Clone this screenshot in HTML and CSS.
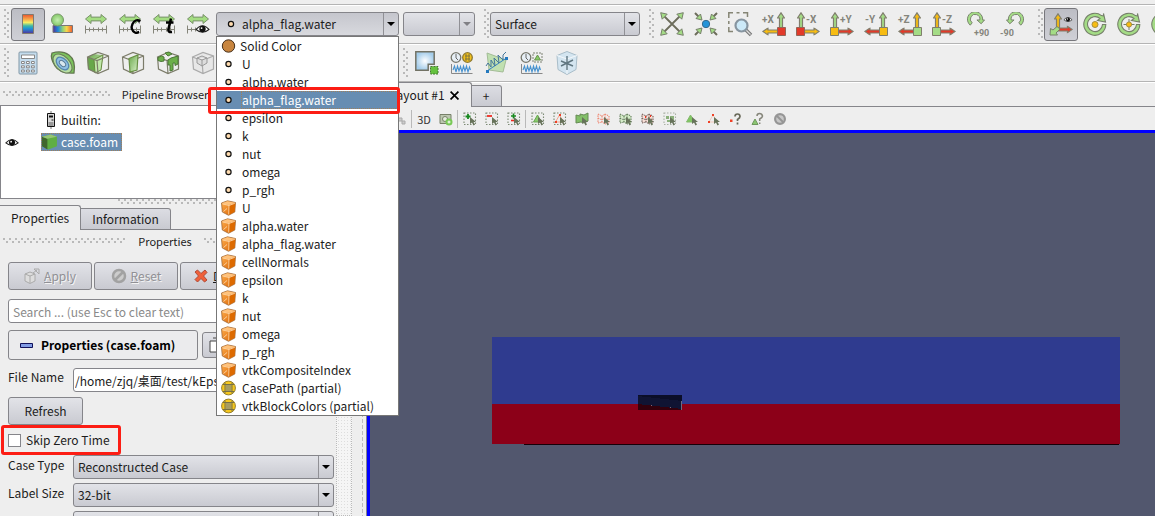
FILE: index.html
```html
<!DOCTYPE html>
<html lang="en">
<head>
<meta charset="utf-8">
<title>ParaView</title>
<link rel="stylesheet" href="styles.css">
</head>
<body>
<svg class="defs" aria-hidden="true">
  <defs>
    <linearGradient id="rainbow-v" x1="0" y1="0" x2="0" y2="1"><stop offset="0" stop-color="#e8532e"/><stop offset=".25" stop-color="#f9a84a"/><stop offset=".42" stop-color="#f5ee62"/><stop offset=".6" stop-color="#3db8a8"/><stop offset=".75" stop-color="#1e8fd5"/><stop offset="1" stop-color="#54309a"/></linearGradient>
    <linearGradient id="rainbow-h"><stop offset="0" stop-color="#5a2d91"/><stop offset=".25" stop-color="#1c86d8"/><stop offset=".5" stop-color="#8fd07a"/><stop offset=".7" stop-color="#f7d84a"/><stop offset="1" stop-color="#ee5a2f"/></linearGradient>
    <radialGradient id="ball"><stop offset="0" stop-color="#c4eeb0"/><stop offset="1" stop-color="#84c868"/></radialGradient>
    <radialGradient id="sky"><stop offset="0" stop-color="#fff"/><stop offset="1" stop-color="#a5cdea"/></radialGradient>
    <linearGradient id="orange" x2="1" y2="1"><stop offset="0" stop-color="#ffb050"/><stop offset="1" stop-color="#d86000"/></linearGradient>
    <linearGradient id="greenface" y2="1"><stop offset="0" stop-color="#6aa84b"/><stop offset="1" stop-color="#d8f0c8"/></linearGradient>
  </defs>
  <symbol id="point" viewBox="0 0 16 16"><circle cx="8" cy="8" r="2.600" fill="#ffdcb0" stroke="#111" stroke-width="1.200"/></symbol>
  <symbol id="solid" viewBox="0 0 16 16"><circle cx="8" cy="8" r="6.200" fill="#c8853f" stroke="#46301c" stroke-width="1"/></symbol>
  <symbol id="cell" viewBox="0 0 16 16"><path d="M1 3 7 .8 15 2.500 14.300 12 8 15.300 1.800 12z" fill="url(#orange)" stroke="#a06a3a" stroke-width=".8"/><path d="M1.300 3.200 8.500 5 14.700 2.700 7 1.200z" fill="#ffc27c"/><path d="M8.500 5.200 8 15 14 11.800 14.700 3z" fill="#dd6a00"/><path d="M2 3.900 8.500 5.500 8.200 14.500M8.500 5.500 14.300 3.300M3 11.500l3.500-3" fill="none" stroke="#ffdfb8" stroke-width=".8"/></symbol>
  <symbol id="field" viewBox="0 0 16 16"><circle cx="8" cy="8" r="6.900" fill="#f6c71c" stroke="#96802e" stroke-width="1"/><path d="M5 5h6v6H5z" fill="#a69c63"/><path d="M4.500 2.500v11M11.500 2.500v11M2.500 4.500h11M2.500 11.500h11" stroke="#777045" stroke-width="1"/></symbol>
  <symbol id="rescale" viewBox="0 0 24 24"><path d="M1.500 7 7 2.500v2.600h10V2.500L22.500 7 17 11.500V8.900H7v2.600z" fill="#a4dd82" stroke="#78906a"/><path d="M1.500 13.500v8M22.500 13.500v8M1.500 17.500h21M5.500 15.500v4M9.500 15.500v4M14.500 15.500v4M18.500 15.500v4" stroke="#85857a" fill="none"/></symbol>
  <symbol id="eye" viewBox="0 0 16 12"><path d="M1 6.500Q8-1.500 15 6.500 8 12.500 1 6.500z" fill="#fff" stroke="#222" stroke-width="1.200"/><circle cx="8" cy="6" r="3.500" fill="#111"/><circle cx="7" cy="5" r="1" fill="#fff"/></symbol>
  <symbol id="wirecube" viewBox="0 0 24 24"><path d="M1.500 6 12 1.500 22.500 5v13L12 22.500 2.500 18zM1.500 6 11 9.500 22.500 5M11 9.500 12 22.500" fill="none" stroke="#7c7c6a" stroke-width="1.200"/></symbol>
  <symbol id="up" viewBox="0 0 8 16"><path d="M4 .8 7.500 6H5.500v9.500h-3V6H.5z" stroke="#807e6d" stroke-width="1.200"/></symbol>
  <symbol id="left" viewBox="0 0 16 8"><path d="M.8 4 6 .5v2h9.500v3H6v2z" stroke="#807e6d" stroke-width="1.100"/></symbol>
  <symbol id="cursor" viewBox="0 0 8 9"><path d="M1 0v7l2-1.500 1.500 3 1.500-1-1.500-2.500H7z" fill="#67735a"/></symbol>
  <symbol id="ring" viewBox="0 0 24 24"><path d="M20.500 4V1.500L22.500 10 14.500 8.500 17 6.500A7.500 7.500 0 1 0 19.500 12.500h3.300A11 11 0 1 1 18.500 3.600z" fill="#a4dc86" stroke="#76806a" stroke-width="1.100"/></symbol>
  <symbol id="rot" viewBox="0 0 20 15"><path d="M4.500 13.500A8 8 0 1 1 17.500 8h2L16 12 11.500 8h3A5 5 0 1 0 6.500 11z" fill="#a4dc86" stroke="#76806a"/></symbol>
  <symbol id="plot" viewBox="0 0 24 24"><circle cx="6" cy="6.500" r="4.800" fill="#e7eff5" stroke="#77776c" stroke-width="1.300"/><path d="M6 3v4l2 2" fill="none" stroke="#666"/><path d="M1.500 13v9.500h21" stroke="#888" fill="none"/><path d="m3 19 1.500-4L6 21l1.500-6L9 20l1.500-4.500L12 21l1.500-6L15 20l1.500-5 1.500 6 1.500-5 1 3" fill="none" stroke="#4792cf" stroke-width="1.100"/></symbol>
  <symbol id="dotted" viewBox="0 0 14 14"><path d="M1 1h11.500v11.500H1z" fill="none" stroke="#7c8a74" stroke-width="1.100" stroke-dasharray="1.500 1.500"/></symbol>
  <symbol id="mesh" viewBox="0 0 14 14"><path d="M1 2 5 4 8 2l4 2v7l-4 1-3-2-4 1zM5 4v6M8 2v9M1 6l4 2 3-2 4 2" stroke-width="1" stroke-dasharray="1.500 1"/></symbol>
</svg>

<div class="menu-edge"></div>

<div class="toolbar main-tools" role="toolbar" aria-label="Display">
  <span class="grip"></span>
  <button class="tool active" aria-label="Color legend"><svg viewBox="0 0 24 24"><path d="M6.500 2.500h11v19h-11z" fill="url(#rainbow-v)" stroke="#807a70"/></svg></button>
  <button class="tool" aria-label="Edit color map"><svg viewBox="0 0 24 24"><path d="M3 13.500h19.500v7H3z" fill="url(#rainbow-h)" stroke="#777"/><circle cx="7.500" cy="8" r="6" fill="url(#ball)" stroke="#79976b"/></svg></button>
  <button class="tool" aria-label="Rescale to data range"><svg viewBox="0 0 24 24"><use href="#rescale"/></svg></button>
  <button class="tool" aria-label="Rescale to custom range"><svg viewBox="0 0 24 24"><use href="#rescale"/><path d="M22.500 9Q17 6.500 14.500 12t2.500 8.500q2 1 4-.5" fill="none" stroke="#000" stroke-width="2.300"/><path d="m22 8-.8 4-1.200-3zM17 21l4-.3v-2z"/></svg></button>
  <button class="tool" aria-label="Rescale over time"><svg viewBox="0 0 24 24"><use href="#rescale"/><path d="M19 6.500 16.500 17q-.8 3.500 3.500 3M14 10.500h7.500" fill="none" stroke="#000" stroke-width="2.600"/></svg></button>
  <button class="tool" aria-label="Rescale to visible range"><svg viewBox="0 0 24 24"><use href="#rescale"/><path d="M11 12h13v10H11z" fill="#eee"/><use href="#eye" x="9" y="11.500" width="15" height="11"/></svg></button>

  <div class="combo color-combo">
    <select aria-label="Color by"><option>alpha_flag.water</option></select>
    <svg class="combo-icon" viewBox="0 0 16 16"><use href="#point"/></svg>
    <span class="arrow"></span>
    <ul class="popup" role="listbox" aria-label="Arrays">
      <li class="wide" role="option"><svg><use href="#solid"/></svg><span>Solid Color</span></li>
      <li role="option"><svg><use href="#point"/></svg><span>U</span></li>
      <li role="option"><svg><use href="#point"/></svg><span>alpha.water</span></li>
      <li class="selected" role="option" aria-selected="true"><svg><use href="#point"/></svg><span>alpha_flag.water</span></li>
      <li role="option"><svg><use href="#point"/></svg><span>epsilon</span></li>
      <li role="option"><svg><use href="#point"/></svg><span>k</span></li>
      <li role="option"><svg><use href="#point"/></svg><span>nut</span></li>
      <li role="option"><svg><use href="#point"/></svg><span>omega</span></li>
      <li role="option"><svg><use href="#point"/></svg><span>p_rgh</span></li>
      <li role="option"><svg><use href="#cell"/></svg><span>U</span></li>
      <li role="option"><svg><use href="#cell"/></svg><span>alpha.water</span></li>
      <li role="option"><svg><use href="#cell"/></svg><span>alpha_flag.water</span></li>
      <li role="option"><svg><use href="#cell"/></svg><span>cellNormals</span></li>
      <li role="option"><svg><use href="#cell"/></svg><span>epsilon</span></li>
      <li role="option"><svg><use href="#cell"/></svg><span>k</span></li>
      <li role="option"><svg><use href="#cell"/></svg><span>nut</span></li>
      <li role="option"><svg><use href="#cell"/></svg><span>omega</span></li>
      <li role="option"><svg><use href="#cell"/></svg><span>p_rgh</span></li>
      <li role="option"><svg><use href="#cell"/></svg><span>vtkCompositeIndex</span></li>
      <li role="option"><svg><use href="#field"/></svg><span>CasePath (partial)</span></li>
      <li role="option"><svg><use href="#field"/></svg><span>vtkBlockColors (partial)</span></li>
    </ul>
  </div>
  <div class="combo component-combo"><select aria-label="Component" disabled><option></option></select><span class="arrow dim"></span></div>
  <span class="grip spaced"></span>
  <div class="combo surface-combo"><select aria-label="Representation"><option>Surface</option></select><span class="arrow"></span></div>
  <span class="grip spaced"></span>
  <button class="tool" aria-label="Reset"><svg viewBox="0 0 24 24"><path d="m4 4 16 16M20 4 4 20" stroke="#6d6d5c" stroke-width="1.800"/><g fill="#a4dc86" stroke="#76806a"><path d="m.7.700 6.500 1.500-5 5zM23.300.700l-6.500 1.500 5 5zM.7 23.300l6.500-1.500-5-5zM23.300 23.300l-6.500-1.500 5-5z"/></g></svg></button>
  <button class="tool" aria-label="Zoom to data"><svg viewBox="0 0 24 24"><path d="m1 1 5 5M23 1l-5 5M1 23l5-5M23 23l-5-5" stroke="#6d6d5c" stroke-width="2"/><g fill="#a4dc86" stroke="#76806a"><path d="m8 8-1.500-6-4.500 4.500zM16 8l1.500-6L22 6.500zM8 16l-1.500 6L2 17.500zM16 16l1.500 6 4.500-4.500z"/></g><circle cx="12" cy="12" r="3.700" fill="#2494d8" stroke="#386b8d"/></svg></button>
  <button class="tool" aria-label="Zoom to box"><svg viewBox="0 0 24 24"><path d="M.8 6V.8H5M8.500.800h3M15 .8h4.500V5M.8 9v3M.8 15v4.500H5" fill="none" stroke="#858575" stroke-width="1.500"/><path d="m18 18 5 5" stroke="#777" stroke-width="3.500"/><path d="m18 18 4.500 4.500" stroke="#ddd" stroke-width="1.300"/><circle cx="13.500" cy="13.500" r="6" fill="#cce9f8" stroke="#8795a0" stroke-width="2.200"/></svg></button>
  <button class="tool" aria-label="Plus X"><svg viewBox="0 0 24 24"><text x="0" y="11">+X</text><use href="#up" x="15" y="0" width="8" height="16" fill="#a4dc86"/><use href="#left" x="0" y="15.500" width="16" height="8" fill="#f7bc12"/><path d="M15.500 15.500h8v8h-8z" fill="#e23a2a" stroke="#936558"/></svg></button>
  <button class="tool" aria-label="Minus X"><svg viewBox="0 0 24 24"><text x="10" y="11">-X</text><use href="#up" x="1" y="0" width="8" height="16" fill="#a4dc86"/><g transform="matrix(-1 0 0 1 24 0)"><use href="#left" x="0" y="15.500" width="16" height="8" fill="#f7bc12"/></g><path d="M.5 15.500h8v8h-8z" fill="#e23a2a" stroke="#936558"/></svg></button>
  <button class="tool" aria-label="Plus Y"><svg viewBox="0 0 24 24"><text x="10" y="11">+Y</text><use href="#up" x="1" y="0" width="8" height="16" fill="#a4dc86"/><g transform="matrix(-1 0 0 1 24 0)"><use href="#left" x="0" y="15.500" width="16" height="8" fill="#e23a2a"/></g><path d="M.5 15.500h8v8h-8z" fill="#f7bc12" stroke="#807e6d"/></svg></button>
  <button class="tool" aria-label="Minus Y"><svg viewBox="0 0 24 24"><text x="1" y="11">-Y</text><use href="#up" x="15" y="0" width="8" height="16" fill="#a4dc86"/><use href="#left" x="0" y="15.500" width="16" height="8" fill="#e23a2a"/><path d="M15.500 15.500h8v8h-8z" fill="#f7bc12" stroke="#807e6d"/></svg></button>
  <button class="tool" aria-label="Plus Z"><svg viewBox="0 0 24 24"><text x="0" y="11">+Z</text><use href="#up" x="15" y="0" width="8" height="16" fill="#f7bc12"/><use href="#left" x="0" y="15.500" width="16" height="8" fill="#e23a2a"/><path d="M15.500 15.500h8v8h-8z" fill="#a4dc86" stroke="#807e6d"/></svg></button>
  <button class="tool" aria-label="Minus Z"><svg viewBox="0 0 24 24"><text x="10" y="11">-Z</text><use href="#up" x="1" y="0" width="8" height="16" fill="#f7bc12"/><g transform="matrix(-1 0 0 1 24 0)"><use href="#left" x="0" y="15.500" width="16" height="8" fill="#e23a2a"/></g><path d="M.5 15.500h8v8h-8z" fill="#a4dc86" stroke="#807e6d"/></svg></button>
  <button class="tool" aria-label="Rotate clockwise"><svg viewBox="0 0 24 24"><use href="#rot" x="0" y="0" width="19" height="15"/><text class="small" x="8" y="24">+90</text></svg></button>
  <button class="tool" aria-label="Rotate counterclockwise"><svg viewBox="0 0 24 24"><g transform="matrix(-1 0 0 1 25 0)"><use href="#rot" x="0" y="0" width="19" height="15"/></g><text class="small" x="0" y="24">-90</text></svg></button>
  <span class="grip spaced"></span>
  <button class="tool active" aria-label="Orientation axes"><svg viewBox="0 0 24 24"><use href="#up" x="5" y="1" width="8" height="16" fill="#f7bc12"/><g transform="matrix(-1 0 0 1 24 0)"><use href="#left" x="0" y="13.500" width="15" height="8" fill="#e23a2a"/></g><path d="m11 17-4 4 1.500 2H1l.5-6.500L4 18l4-3.500z" fill="#a4dc86" stroke="#76806a"/><use href="#eye" x="14" y="4" width="10" height="7"/></svg></button>
  <button class="tool" aria-label="Show center"><svg viewBox="0 0 24 24"><use href="#ring"/><circle cx="12" cy="12.500" r="3" fill="#f7bc12" stroke="#a58d42"/></svg></button>
  <button class="tool" aria-label="Reset center"><svg viewBox="0 0 24 24"><use href="#ring"/><path d="M12 7v11M6.500 12.500h11" stroke="#76806a"/><circle cx="12" cy="12.500" r="2.600" fill="#f7bc12" stroke="#a58d42"/></svg></button>
  <button class="tool" aria-label="Pick center"><svg viewBox="0 0 24 24"><use href="#ring"/></svg></button>
</div>

<div class="toolbar filters" role="toolbar" aria-label="Filters">
  <span class="grip"></span>
  <button class="tool" aria-label="Calculator"><svg viewBox="0 0 24 24"><path d="M4 1h16q1 0 1 1v20q0 1-1 1H4q-1 0-1-1V2q0-1 1-1z" fill="#c4dced" stroke="#8197a6"/><path d="M5.500 4h13v3.500h-13z" fill="#fff" stroke="#888"/><g fill="#fff" stroke="#888"><path d="M5.500 10.500h2.800v2H5.500zM10.500 10.500h2.800v2h-2.800zM15.500 10.500h2.800v2h-2.800zM5.500 14.800h2.800v2H5.500zM10.500 14.800h2.800v2h-2.800zM15.500 14.800h2.800v2h-2.800zM5.500 19h2.800v2H5.500zM10.500 19h2.800v2h-2.800zM15.500 19h2.800v2h-2.800z"/></g></svg></button>
  <button class="tool" aria-label="Contour"><svg viewBox="0 0 24 24"><path d="M1 2Q11-1 18 4t5 18Q9 23 4 15T1 2z" fill="#7cc45c" stroke="#62784f" stroke-width="1.300"/><ellipse cx="11.500" cy="12.500" rx="11.500" ry="7" transform="rotate(45 11.500 12.500)" fill="#b8dfa2" stroke="#677a58"/><ellipse cx="11.500" cy="12.500" rx="7.500" ry="4.800" transform="rotate(45 11.500 12.500)" fill="#8fc0e4" stroke="#5584ad" stroke-width="1.300"/><ellipse cx="11.500" cy="12.500" rx="3.800" ry="2.300" transform="rotate(45 11.500 12.500)" fill="#d9e8ef" stroke="#5b7d97"/></svg></button>
  <button class="tool" aria-label="Clip"><svg viewBox="0 0 24 24"><path d="M1.500 6 7 3l10 1-2 15-6 3-7-4z" fill="url(#greenface)"/><path d="M1.500 6 9 9v12l-7-3z" fill="#67a84a"/><path d="M8 8.500 17 4l-2 15-6 3z" fill="#c1e8aa" stroke="#66893f"/><use href="#wirecube"/></svg></button>
  <button class="tool" aria-label="Slice"><svg viewBox="0 0 24 24"><use href="#wirecube"/><path d="M8 7.500 17 4l-1 15-7 2z" fill="url(#greenface)" stroke="#668f42" stroke-width="1.200"/></svg></button>
  <button class="tool" aria-label="Threshold"><svg viewBox="0 0 24 24"><use href="#wirecube"/><path d="M2 6.500 5.500 5 8 6v4l-3 .5-3-1zM9 2l4-1 3 2-4 2zM12 9l3-2 7-2v8l-3 1.500V12h-2v7l-3 1v-6h-2z" fill="#6caf4a" stroke="#4d7739"/></svg></button>
  <button class="tool" aria-label="Extract subset"><svg viewBox="0 0 24 24"><path d="M1.500 6 12 1.500 22.500 5v13L12 22.500 2.500 18zM1.500 6 11 9.500 22.500 5M11 9.500 12 22.500" fill="#e7e7e7" stroke="#aaa" stroke-width="1.200"/><path d="m6 7 5-2 5 2v5l-5 3-5-3zM6 7l5 2 5-2M11 9v6" fill="#ddd" stroke="#999"/></svg></button>
  <span class="toolbar-space"></span>
  <span class="grip"></span>
  <button class="tool" aria-label="Extract selection"><svg viewBox="0 0 24 24"><path d="M.8.800h18.400v12.400h-6v6H.8z" fill="url(#sky)" stroke="#727264" stroke-width="1.500"/><path d="M15.500 15.500h7.500v7.500h-7.500z" fill="#65c23f" stroke="#447732" stroke-dasharray="2 1"/></svg></button>
  <button class="tool" aria-label="Plot global variables"><svg viewBox="0 0 24 24"><use href="#plot"/><circle cx="17.500" cy="6.500" r="4.800" fill="#f4c21b" stroke="#8e7931" stroke-width="1.300"/><path d="M15 5h5M15 8h5M16 3v7M19 3v7" stroke="#7e743f"/></svg></button>
  <button class="tool" aria-label="Plot over line"><svg viewBox="0 0 24 24"><path d="m2 2 19 7-3 12L4 19z" fill="#c0e0b1" stroke="#a3bc96"/><path d="M2 20 20 8" stroke="#337fc2"/><path d="m1 15 2-3 3 4 0-7 4 6-1-8 5 5-1-8 5 5 0-5 3-3" fill="none" stroke="#45779a"/><path d="M1 19h3v3H1zM20 6h3v3h-3z" fill="#2579be"/></svg></button>
  <button class="tool" aria-label="Plot selection over time"><svg viewBox="0 0 24 24"><use href="#plot"/><path d="M13 2h9v9h-9z" fill="none" stroke="#7c8173" stroke-dasharray="2 1"/><path d="m17.500 4 3 5h-6z" fill="#86cb66" stroke="#68914f"/></svg></button>
  <button class="tool" aria-label="Probe location"><svg viewBox="0 0 24 24"><path d="m12 .5 10 4-1 14-9 5-9-5-1-14z" fill="#d4e5f0" stroke="#a9bdc9"/><path d="m2 4.500 10 3.500 10-3.500M12 8v15" fill="none" stroke="#f4f8fb"/><path d="M12 5v14M6 10l12 5M6 15l12-6" stroke="#607680" stroke-width="1.400"/></svg></button>
</div>

<main class="workspace">
  <section class="dock">
    <h2 class="dock-title"><span class="dots"></span>Pipeline Browser<span class="dots"></span></h2>
    <div class="tree">
      <div class="tree-row"><span class="visibility"></span><svg class="node" viewBox="0 0 16 18"><path d="M8.500 0v3M8.500 16v2" stroke="#777"/><path d="M5 2.500h7v13H5z" fill="#d8d8d8" stroke="#111"/><path d="M6.500 4.500h4v2h-4zM9 8.500h2v1H9z" fill="#111"/><path d="M6 11h5v4H6z" fill="#999"/></svg><span class="node-label">builtin:</span></div>
      <div class="tree-row"><span class="visibility"><svg viewBox="0 0 16 12"><use href="#eye"/></svg></span><span class="tree-selected"><svg class="node" viewBox="0 0 16 16"><path d="m1 3 8-2 6 2v9l-8 3-6-3z" fill="#5fae43"/><path d="m1 3 5 2v10l-5-3z" fill="#3f662e"/><path d="m1 3 8-2 6 2-9 2z" fill="#96c574"/></svg><span>case.foam</span></span></div>
    </div>
    <div class="dock-split"><span class="dots"></span></div>
    <div class="tabs" role="tablist"><button class="tab current" role="tab">Properties</button><button class="tab" role="tab">Information</button></div>
    <h2 class="dock-title"><span class="dots"></span>Properties<span class="dots"></span></h2>
    <div class="pane">
      <form class="properties">
        <div class="actions">
          <button type="button" disabled><svg viewBox="0 0 16 16"><path d="m1 6 5-2 5 2v7l-5 2.500L1 13z" fill="#ddd" stroke="#aaa"/><path d="m1 6 5 2 5-2M6 8v7M9 5l4-3M10 1h5v5z" fill="none" stroke="#aaa"/></svg><span><u>A</u>pply</span></button>
          <button type="button" disabled><svg viewBox="0 0 16 16"><circle cx="8" cy="8" r="6" fill="#ccc" stroke="#a2a2a2" stroke-width="2.500"/><path d="m4 12 8-8" stroke="#a2a2a2" stroke-width="2.500"/></svg><span><u>R</u>eset</span></button>
          <button type="button" class="delete"><svg viewBox="0 0 16 16"><path d="m2 4 2.500-2L8 5.500 12 2l2 2.500L10.500 8l3.500 4-2.500 2L8 10.500 4.500 14 2 11.500 5.500 8z" fill="#f0603a" stroke="#b04a36"/></svg><span><u>D</u>elete</span></button>
        </div>
        <input class="search" type="text" aria-label="Search properties" placeholder="Search ... (use Esc to clear text)">
        <div class="group-row">
          <button type="button" class="group"><svg viewBox="0 0 13 5"><path d="M.5.500h12v4H.5z" fill="#819be4" stroke="#10105a"/></svg>Properties (case.foam)</button>
          <button type="button" class="copy" aria-label="Copy"><svg viewBox="0 0 16 16"><path d="M2 4h9v11H2z" fill="#fff" stroke="#444"/><path d="M5 1h9v11" fill="none" stroke="#444"/></svg></button>
        </div>
        <div class="field"><label for="file">File Name</label><input id="file" type="text" value="/home/zjq/桌面/test/kEpsilon/case.foam"></div>
        <button type="button" class="refresh">Refresh</button>
        <div class="skip"><input id="skip" type="checkbox"><label for="skip">Skip Zero Time</label></div>
        <div class="field"><label for="case">Case Type</label><div class="combo"><select id="case"><option>Reconstructed Case</option></select><span class="arrow"></span></div></div>
        <div class="field"><label for="size">Label Size</label><div class="combo"><select id="size"><option>32-bit</option></select><span class="arrow"></span></div></div>
        <div class="field"><span></span><div class="combo"><select aria-label="Arrays status"><option></option></select><span class="arrow"></span></div></div>
      </form>
      <div class="scrollbar"></div>
    </div>
  </section>
  <div class="splitter"><span></span></div>
  <section class="view">
    <div class="tabs view-tabs" role="tablist"><div class="tab current layout-tab" role="tab">Layout #1<button aria-label="Close layout"><svg viewBox="0 0 8 8"><path d="m.5.500 7 7M7.500.500l-7 7" stroke="#000" stroke-width="1.500"/></svg></button></div><button class="tab add">+</button></div>
    <div class="view-tools" role="toolbar" aria-label="View">
      <button class="mini" aria-label="Undo camera"><svg viewBox="0 0 14 14"><path d="M3 3h5l-2 3 4 1-1 5" stroke="#aaa" fill="none" stroke-width="2"/></svg></button>
      <button class="mini" aria-label="Redo camera"><svg viewBox="0 0 14 14"><path d="M5 2v4h4v3h3v3H9V9H5l-3 2V6z" stroke="#aaa" fill="#ccc"/></svg></button>
      <span class="sep"></span>
      <button class="mini text">3D</button>
      <button class="mini" aria-label="Capture"><svg viewBox="0 0 14 14"><path d="M1 2.500h11v9H1z" fill="#bcc7b0" stroke="#778068"/><circle cx="6" cy="7" r="2.500" fill="#e4eddd" stroke="#778068"/><circle cx="10" cy="10" r="3.500" fill="#79c957"/><path d="M8.500 10h3M10 8.500v3" stroke="#fff"/></svg></button>
      <span class="sep"></span>
      <button class="mini" aria-label="Add selection"><svg viewBox="0 0 14 14"><use href="#dotted"/><path d="M2.500 4.500h5M5 2v5" stroke="#17891e" stroke-width="1.800"/><use href="#cursor" x="6" y="5" width="8" height="9"/></svg></button>
      <button class="mini" aria-label="Subtract selection"><svg viewBox="0 0 14 14"><use href="#dotted"/><path d="M2 4h5" stroke="#ef2a20" stroke-width="1.800"/><use href="#cursor" x="6" y="5" width="8" height="9"/></svg></button>
      <button class="mini" aria-label="Toggle selection"><svg viewBox="0 0 14 14"><use href="#dotted"/><path d="M4 4h5M6.500 1.500v5" stroke="#17891e" stroke-width="1.600"/><path d="M4 8.500h5" stroke="#ef2a20" stroke-width="1.600"/><use href="#cursor" x="6" y="5" width="8" height="9"/></svg></button>
      <span class="sep"></span>
      <button class="mini" aria-label="Select cells on"><svg viewBox="0 0 14 14"><use href="#dotted"/><path d="m6.500 3 4 7h-8z" fill="#8acc6e" stroke="#6aa653"/><use href="#cursor" x="6" y="5" width="8" height="9"/></svg></button>
      <button class="mini" aria-label="Select points on"><svg viewBox="0 0 14 14"><use href="#dotted"/><path d="m6.500 3 4 7h-8z" fill="none" stroke="#f3a38e"/><path d="M6 2h2v2H6zM2 9h2v2H2z" fill="#ef4126"/><use href="#cursor" x="6" y="5" width="8" height="9"/></svg></button>
      <button class="mini" aria-label="Select cells through"><svg viewBox="0 0 14 14"><path d="m1 3 4 1V2l4 1 4-2v8l-4 2-3-1-5 1z" fill="#82bf68" stroke="#668b54"/><use href="#cursor" x="6" y="5" width="8" height="9"/></svg></button>
      <button class="mini" aria-label="Select points through"><svg viewBox="0 0 14 14"><use href="#mesh" fill="none" stroke="#ef7a62"/><use href="#cursor" x="6" y="5" width="8" height="9"/></svg></button>
      <button class="mini" aria-label="Polygon cells"><svg viewBox="0 0 14 14"><use href="#mesh" fill="#d5ecc9" stroke="#55704c"/><use href="#cursor" x="6" y="5" width="8" height="9"/></svg></button>
      <button class="mini" aria-label="Polygon points"><svg viewBox="0 0 14 14"><use href="#mesh" fill="#f8e0d8" stroke="#66504a"/><path d="M4 4h1v2H4zM7 6h1v2H7zM9 3h1v2H9z" fill="#f03424"/><use href="#cursor" x="6" y="5" width="8" height="9"/></svg></button>
      <button class="mini" aria-label="Select block"><svg viewBox="0 0 14 14"><g opacity=".6"><use href="#dotted"/></g><path d="M3 4h3v3H3zM7 4h4v4H7zM4 8h3v2H4z" fill="#8bb07b"/><use href="#cursor" x="6" y="5" width="8" height="9"/></svg></button>
      <button class="mini" aria-label="Interactive cells"><svg viewBox="0 0 14 14"><path d="m5.500 3 4 7H1.500z" fill="#80c762" stroke="#84b96c"/><use href="#cursor" x="6" y="5" width="8" height="9"/></svg></button>
      <button class="mini" aria-label="Interactive points"><svg viewBox="0 0 14 14"><path d="m6 3 4 7H2z" fill="none" stroke="#f0c9ba"/><path d="M5 2h2v2H5zM1 9h2v2H1z" fill="#ef4126"/><use href="#cursor" x="6" y="5" width="8" height="9"/></svg></button>
      <button class="mini" aria-label="Hover points"><svg viewBox="0 0 14 14"><path d="M1 7.500h2.500V10H1z" fill="#ef4126"/><path d="M6 4.500q0-2.500 2.500-2.500T11 4.500q0 1.500-2.500 3V9M8.500 10.500v2" fill="none" stroke="#696959" stroke-width="1.700"/></svg></button>
      <button class="mini" aria-label="Hover cells"><svg viewBox="0 0 14 14"><path d="m4 7 3 5.500H1z" fill="#8bc671" stroke="#6f985d"/><path d="M6 4q0-2.500 2.500-2.500T11.500 4q0 1.500-2.800 3v2M8.700 10.500v1.500" fill="none" stroke="#85857a" stroke-width="1.500"/></svg></button>
      <button class="mini" aria-label="Clear selection"><svg viewBox="0 0 14 14"><circle cx="7" cy="7" r="4.900" fill="#c7c7c7" stroke="#959595" stroke-width="2.200"/><path d="m4 4 6 6" stroke="#959595" stroke-width="2"/></svg></button>
    </div>
    <div class="render">
      <svg viewBox="0 0 785 382" preserveAspectRatio="xMinYMin" shape-rendering="crispEdges" role="img" aria-label="Water surface">
        <path d="M122 204h628v68H122z" fill="#2f3b8f"/>
        <path d="M122 271h628v40H122z" fill="#8c0018"/>
        <path d="M154 311h595v1H154z" fill="#170008"/>
        <path d="M268 262h44v15h-44z" fill="#101433"/>
        <path d="M268 262h44v6l-44-5z" fill="#0b0e28"/>
        <path d="M268 271l44 5v1h-44z" fill="#33000c"/>
        <path d="M311 268h1v9h-1z" fill="#6d6b82"/>
        <path d="M281 272h1v1h-1zM300 274h1v1h-1z" fill="#7c6475"/>
      </svg>
    </div>
  </section>
</main>
</body>
</html>
```

FILE: styles.css
```css
* { box-sizing: border-box; }

body {
  margin: 0;
  height: 100vh;
  overflow: hidden;
  display: flex;
  flex-direction: column;
  background: #eee;
  color: #1c1c1c;
  font: 12px/18px "Noto Sans CJK SC", "Noto Sans", sans-serif;
}

button, input, select { font: inherit; color: inherit; margin: 0; }
button { padding: 0; }
svg { display: block; flex: none; }
.defs { position: absolute; width: 0; height: 0; }

.menu-edge { flex: none; height: 5px; border-bottom: 1px solid #b4b4b4; }

/* Toolbars */
.toolbar {
  flex: none;
  display: flex;
  align-items: center;
  height: 39px;
  padding-left: 4px;
  border-top: 1px solid #fff;
  border-bottom: 1px solid #b4b4b4;
}
.toolbar.main-tools { padding-bottom: 1px; }
.toolbar.filters { height: 38px; }

.grip {
  flex: none;
  width: 6px;
  height: 30px;
  margin-right: 1px;
  background:
    radial-gradient(circle at 1px 1px, #b9b9b9 1px, transparent 1px) 0 0 / 6px 6px,
    radial-gradient(circle at 1px 1px, #b9b9b9 1px, transparent 1px) 3px 3px / 6px 6px;
}
.grip.spaced { margin: 0 0 0 9px; }
.filters .grip { margin-right: 0; }

.tool {
  flex: none;
  display: grid;
  place-items: center;
  width: 34px;
  height: 33px;
  border: 1px solid transparent;
  border-radius: 3px;
  background: none;
}
.filters .tool { width: 35px; }
.tool svg { width: 24px; height: 24px; overflow: visible; }
.tool.active { border-color: #77777c; background: linear-gradient(#bcbdc4, #cfd0d6); }
.tool text { font: bold 10px Roboto, sans-serif; fill: #85857c; }
.tool text.small { font-size: 9px; }
.toolbar-space { flex: none; width: 183px; }

/* Drop-downs */
.combo { position: relative; flex: none; height: 24px; }
.combo select {
  appearance: none;
  display: block;
  width: 100%;
  height: 24px;
  padding: 0 24px 0 4px;
  border: 1px solid #85858a;
  border-radius: 3px;
  background: linear-gradient(#e2e3e8, #c9cad1);
  opacity: 1;
}
.arrow {
  position: absolute;
  top: 1px;
  right: 1px;
  bottom: 1px;
  width: 15px;
  border-left: 1px solid #909095;
  display: grid;
  place-items: center;
  pointer-events: none;
}
.arrow::after {
  content: "";
  border: 4px solid transparent;
  border-top-color: #000;
  border-bottom: 0;
}
.arrow.dim::after { border-top-color: #808085; }
.color-combo { width: 183px; margin-left: 1px; z-index: 2; }
.color-combo select { padding-left: 25px; background: linear-gradient(#c5c6cd, #d8d9de); }
.combo-icon { position: absolute; left: 7px; top: 4px; width: 16px; height: 16px; }
.component-combo { width: 72px; margin-left: 4px; }
.surface-combo { width: 150px; }

.popup {
  position: absolute;
  top: 100%;
  left: 0;
  width: 100%;
  margin: 0;
  padding: 0;
  list-style: none;
  background: #fff;
  border: 1px solid #777;
}
.popup li { position: relative; display: flex; align-items: center; gap: 4px; height: 18px; padding-left: 3px; }
.popup li.wide { gap: 2px; }
.popup svg { width: 17px; height: 16px; }
.popup span { padding-left: 1px; }
.popup .selected { background: #678db2; color: #fff; }
.popup .selected span { flex: 1; outline: 1px dotted #a0805c; outline-offset: -1px; }
.popup .selected::after {
  content: "";
  position: absolute;
  inset: -4px -2px -5px -9px;
  border: 3px solid #fc1d14;
  border-radius: 3px;
}

/* Docks */
.workspace { flex: 1; min-height: 0; display: flex; box-shadow: inset 0 1px #fff; }
.dock { flex: none; width: 352px; display: flex; flex-direction: column; }
.dock-title {
  flex: none;
  display: flex;
  align-items: center;
  gap: 12px;
  height: 22px;
  margin: 0;
  padding: 0 25px 0 3px;
  font-size: 11px;
  font-weight: normal;
}
.dots {
  flex: 1;
  height: 6px;
  background:
    radial-gradient(circle at 1px 1px, #b9b9b9 1px, transparent 1px) 0 0 / 6px 6px,
    radial-gradient(circle at 1px 1px, #b9b9b9 1px, transparent 1px) 3px 3px / 6px 6px;
}
.dock > .dock-title:first-child { height: 23px; }
.tree { flex: none; height: 94px; padding-top: 3px; border: 1px solid #85858a; background: #fff; }
.tree-row { display: flex; align-items: center; height: 22px; }
.visibility { width: 41px; padding-left: 4px; }
.visibility svg { width: 14px; height: 11px; }
.node { width: 17px; height: 18px; }
.node-label { padding-left: 2px; }
.tree-selected {
  display: flex;
  align-items: center;
  gap: 3px;
  height: 18px;
  margin-left: -1px;
  padding-right: 4px;
  background: #678db2;
  color: #fff;
  outline: 1px dotted #a0805c;
  outline-offset: -1px;
}
.dock-split { flex: none; height: 6px; display: flex; align-items: center; padding: 0 118px; }

.tabs { flex: none; display: flex; align-items: flex-end; height: 25px; box-shadow: inset 0 -1px #85858a; }
.tab {
  height: 22px;
  padding: 0 11px;
  border: 1px solid #85858a;
  border-left: 0;
  border-radius: 0 3px 0 0;
  background: linear-gradient(#dcdde3, #c9cad1);
}
.tab.current { height: 25px; background: #eee; border-bottom: 0; }

.pane { flex: 1; min-height: 0; display: flex; padding-top: 10px; }
.properties { flex: 1; display: flex; flex-direction: column; align-items: stretch; padding: 0 2px 0 8px; overflow: hidden; }
.properties button {
  border: 1px solid #85858a;
  border-radius: 3px;
  background: linear-gradient(#e2e3e8, #c9cad1);
}
.actions { display: grid; grid-template-columns: repeat(3, 84px); gap: 2px; flex: none; }
.actions button { display: flex; align-items: center; justify-content: center; gap: 4px; height: 28px; }
.actions button:disabled { color: #909095; text-shadow: 1px 1px #f4f4f4; }
.actions .delete { justify-content: flex-start; padding-left: 12px; }
.actions svg { width: 16px; height: 16px; }
.properties input[type="text"] {
  height: 24px;
  padding: 0 4px;
  border: 1px solid #85858a;
  border-radius: 3px;
  background: #fff;
}
.properties input::placeholder { color: #8a8a8a; }
.properties .search { flex: none; margin: 9px 0 7px; }
.group-row { display: flex; flex: none; gap: 4px; align-items: center; }
.properties .group {
  display: flex;
  align-items: center;
  gap: 8px;
  width: 190px;
  height: 30px;
  padding-left: 11px;
  background: #ebebed;
  color: #000;
  font-weight: bold;
}
.group svg { width: 13px; height: 5px; }
.copy { display: grid; place-items: center; width: 28px; height: 26px; }
.copy svg { width: 16px; height: 16px; }
.field { flex: none; display: grid; grid-template-columns: 65px 1fr; margin-bottom: 4px; line-height: 20px; }
.group-row + .field { margin: 8px 0 5px; line-height: 18px; }
.properties .field input[type="text"] { min-width: 0; padding: 0 1px; }
.properties .refresh { flex: none; width: 75px; height: 28px; }
.skip {
  flex: none;
  display: flex;
  align-items: center;
  gap: 5px;
  width: 120px;
  height: 30px;
  margin: 0 0 0 -7px;
  padding-left: 4px;
  border: 3px solid #fc1d14;
  border-radius: 3px;
}
.skip input {
  appearance: none;
  width: 13px;
  height: 13px;
  border: 1px solid #85858a;
  background: #fff;
}
.scrollbar {
  flex: none;
  width: 16px;
  border: 1px dotted #bbb;
  background: radial-gradient(#ddd 1px, transparent 1px) 0 0 / 3px 3px #f5f5f5;
}
.splitter { flex: none; width: 14px; display: flex; justify-content: flex-end; padding-right: 2px; }
.splitter span { width: 3px; background: radial-gradient(#bbb 1px, transparent 1px) 0 0 / 3px 6px; }

/* Render view */
.view { flex: 1; min-width: 0; display: flex; flex-direction: column; border-left: 1px solid #85858a; }
.layout-tab { display: flex; align-items: center; gap: 5px; padding: 0 12px 0 23px; }
.layout-tab button { width: 9px; height: 9px; border: 0; background: none; }
.tab.add { width: 30px; }
.view-tools { flex: none; display: flex; align-items: center; height: 23px; }
.mini { flex: none; display: grid; place-items: center; width: 22px; height: 22px; border: 0; background: none; }
.mini svg { width: 14px; height: 14px; }
.mini.text { font-size: 11px; color: #333; }
.sep { flex: none; width: 1px; height: 18px; margin-right: 1px; background: #b9b9b9; }
.render { flex: 1; min-height: 0; border-top: 3px solid #00f; border-left: 3px solid #00f; background: #52576e; overflow: hidden; }
.render svg { width: 100%; height: auto; }
```
